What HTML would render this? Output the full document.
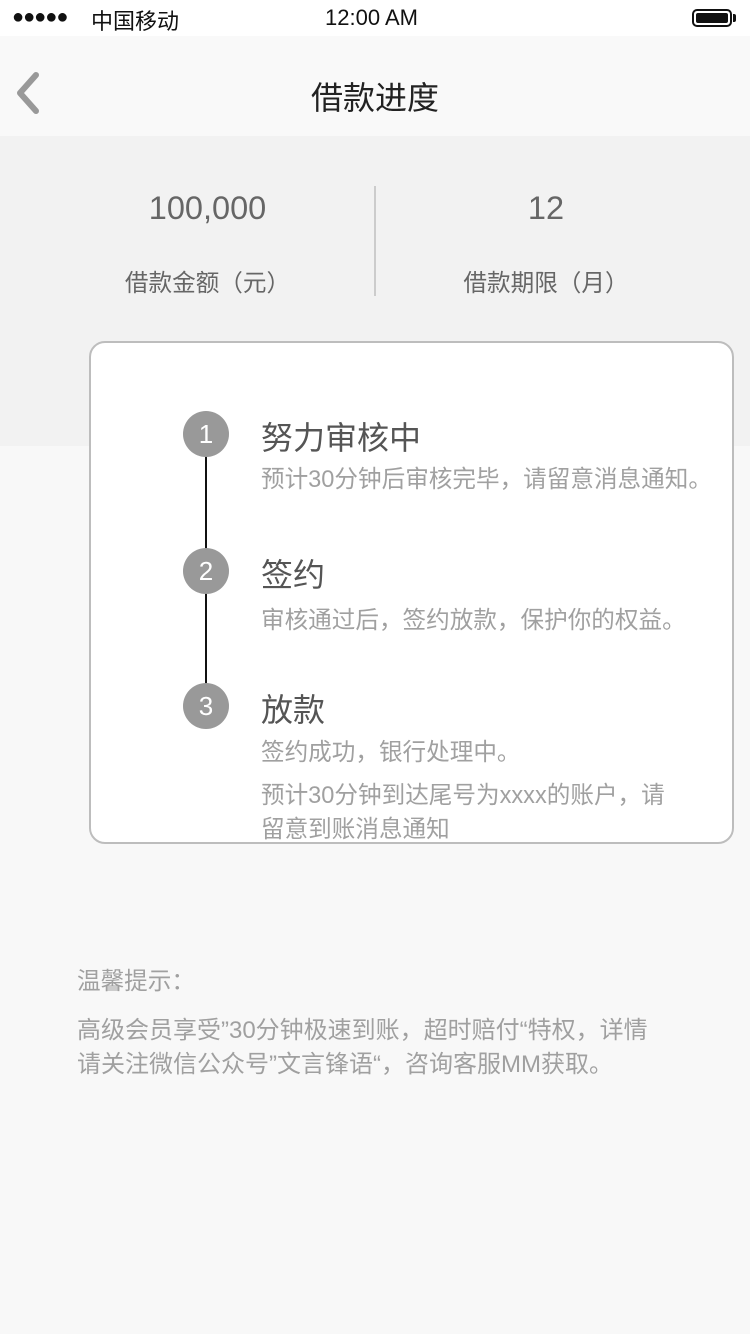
<!DOCTYPE html>
<html><head><meta charset="utf-8"><style>
*{margin:0;padding:0;box-sizing:border-box}
body{width:750px;height:1334px;background:#f8f8f8;font-family:"Liberation Sans","Noto Sans CJK SC",sans-serif;position:relative;overflow:hidden}
.a{position:absolute;white-space:nowrap}
.circ{position:absolute;left:183px;width:46px;height:46px;border-radius:50%;background:#999;color:#fff;font-size:26px;text-align:center;line-height:46px}
.line{position:absolute;left:205px;width:2px;background:#111}
.t{position:absolute;left:261px;font-size:32px;color:#555;white-space:nowrap}
.s{position:absolute;left:261px;font-size:23.6px;color:#a0a0a0;white-space:nowrap}
</style></head><body>
<div class="a" style="left:0;top:0;width:750px;height:36px;background:#fff"></div>
<div class="a" style="left:12px;top:6px;font-size:20px;color:#111;letter-spacing:-1px">●●●●●</div>
<div class="a" style="left:91px;top:4px;font-size:22px;color:#111">中国移动</div>
<div class="a" style="left:325px;top:5px;font-size:22px;color:#111">12:00 AM</div>
<div class="a" style="left:692px;top:9px;width:40px;height:18px;border:2px solid #111;border-radius:5px;padding:2px"><div style="width:100%;height:100%;background:#111;border-radius:2px"></div></div>
<div class="a" style="left:733px;top:14px;width:3px;height:8px;background:#111;border-radius:0 2px 2px 0"></div>
<div class="a" style="left:0;top:36px;width:750px;height:100px;background:#f9f9f9"></div>
<svg class="a" style="left:8px;top:70px" width="34" height="46"><path d="M28 5 L12 23 L28 41" fill="none" stroke="#999" stroke-width="6" stroke-linecap="round" stroke-linejoin="round"/></svg>
<div class="a" style="left:0;top:73px;width:750px;text-align:center;font-size:32px;color:#222">借款进度</div>
<div class="a" style="left:0;top:136px;width:750px;height:310px;background:#f2f2f2"></div>
<div class="a" style="left:0;top:190px;width:415px;text-align:center;font-size:32.5px;color:#666">100,000</div>
<div class="a" style="left:0;top:264px;width:415px;text-align:center;font-size:23.6px;color:#666">借款金额（元）</div>
<div class="a" style="left:374px;top:186px;width:2px;height:110px;background:#ccc"></div>
<div class="a" style="left:345px;top:190px;width:402px;text-align:center;font-size:32.5px;color:#666">12</div>
<div class="a" style="left:345px;top:264px;width:402px;text-align:center;font-size:23.6px;color:#666">借款期限（月）</div>
<div class="a" style="left:89px;top:341px;width:645px;height:503px;background:#fff;border:2px solid #bdbdbd;border-radius:16px"></div>
<div class="line" style="top:455px;height:95px"></div>
<div class="line" style="top:592px;height:92px"></div>
<div class="circ" style="top:411px">1</div>
<div class="circ" style="top:548px">2</div>
<div class="circ" style="top:683px">3</div>
<div class="t" style="top:413px">努力审核中</div>
<div class="s" style="top:460px">预计30分钟后审核完毕，请留意消息通知。</div>
<div class="t" style="top:550px">签约</div>
<div class="s" style="top:601px">审核通过后，签约放款，保护你的权益。</div>
<div class="t" style="top:685px">放款</div>
<div class="s" style="top:733px">签约成功，银行处理中。</div>
<div class="s" style="top:776px">预计30分钟到达尾号为xxxx的账户，请</div>
<div class="s" style="top:810px">留意到账消息通知</div>
<div class="a" style="left:77px;top:962px;font-size:23.6px;color:#a0a0a0">温馨提示：</div>
<div class="a" style="left:77px;top:1014px;font-size:24px;color:#a0a0a0;line-height:34px">高级会员享受”30分钟极速到账，超时赔付“特权，详情<br>请关注微信公众号”文言锋语“，咨询客服MM获取。</div>
</body></html>
